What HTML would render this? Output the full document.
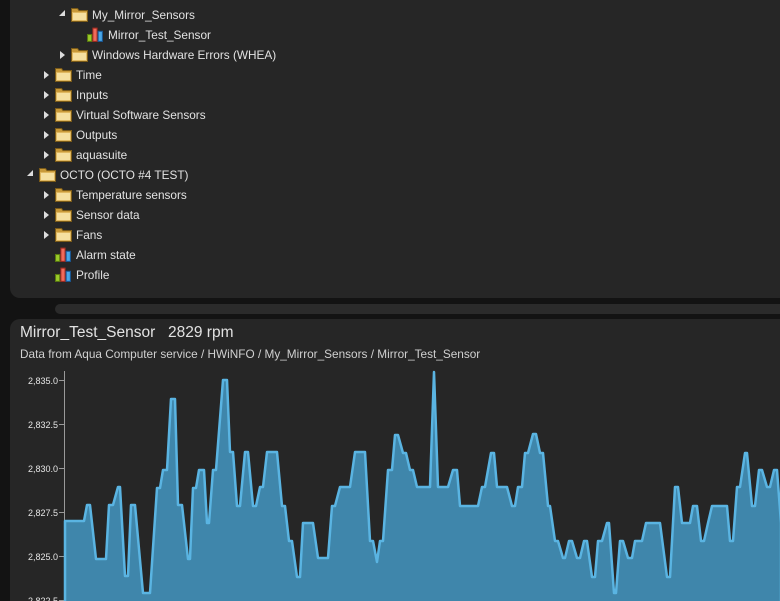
<!DOCTYPE html><html><head><style>
html,body{margin:0;width:780px;height:601px;overflow:hidden}
body{background:#131313;position:relative;font-family:"Liberation Sans","DejaVu Sans",sans-serif;color:#e2e2e2}
.p1{position:absolute;left:10px;top:-10px;width:790px;height:308px;background:#262626;border-radius:10px}
.sb{position:absolute;left:55px;top:304px;width:740px;height:10px;background:#2b2b2b;border-radius:5px}
.p2{position:absolute;left:10px;top:319px;width:790px;height:300px;background:#262626;border-radius:10px}
.r{position:absolute;font-size:11.8px;line-height:20px;height:20px;white-space:nowrap}
.ar{position:absolute;width:0;height:0}
.ar.c{border-left:5px solid #ddd;border-top:4px solid transparent;border-bottom:4px solid transparent}
.ar.o{border-right:6px solid #ddd;border-top:6px solid transparent}
.f{position:absolute}
</style></head><body>
<div class="p1"></div><div class="sb"></div><div class="p2"></div>
<svg width="0" height="0" style="position:absolute"><defs>
<symbol id="fd" viewBox="0 0 17 15"><path d="M0.5 1.5h6l1.5 2h8.5v11h-16z" fill="#c99a3a" stroke="#7a5a18"/><rect x="1.5" y="5.5" width="14" height="8" fill="#f6e0a0" stroke="#e0b860"/></symbol>
<symbol id="sn" viewBox="0 0 16 14"><rect x="0.5" y="7" width="4" height="6.5" fill="#9bcb2a" stroke="#5a7a10"/><rect x="5.5" y="1" width="4" height="12.5" fill="#f06a5a" stroke="#a02a20"/><rect x="10.5" y="4" width="4" height="9.5" fill="#4aa8e8" stroke="#1a5a98"/></symbol>
</defs></svg>
<div id="tree"></div>
<script>
var rows=[[2,'o','f','My_Mirror_Sensors'],[3,'','s','Mirror_Test_Sensor'],[2,'c','f','Windows Hardware Errors (WHEA)'],[1,'c','f','Time'],[1,'c','f','Inputs'],[1,'c','f','Virtual Software Sensors'],[1,'c','f','Outputs'],[1,'c','f','aquasuite'],[0,'o','f','OCTO (OCTO #4 TEST)'],[1,'c','f','Temperature sensors'],[1,'c','f','Sensor data'],[1,'c','f','Fans'],[1,'','s','Alarm state'],[1,'','s','Profile']];
var h='';rows.forEach(function(r,i){var y=5+i*20,b=[7,23,39,55][r[0]];
if(r[1]=='c')h+='<div class="ar c" style="left:'+(b+21)+'px;top:'+(y+6)+'px"></div>';
if(r[1]=='o')h+='<div class="ar o" style="left:'+(b+20)+'px;top:'+(y+5)+'px"></div>';
var ix=b+32;h+='<svg class="f" style="left:'+ix+'px;top:'+(y+2)+'px;width:17px;height:15px"><use href="#'+(r[2]=='f'?'fd':'sn')+'"/></svg>';
h+='<div class="r" style="left:'+(ix+21)+'px;top:'+y+'px">'+r[3]+'</div>';});
document.getElementById('tree').innerHTML=h;
</script>
<div style="position:absolute;left:20px;top:324px;font-size:15.5px">Mirror_Test_Sensor<span style="position:absolute;left:148px;white-space:nowrap">2829 rpm</span></div>
<div style="position:absolute;left:20px;top:347px;font-size:11.8px;color:#d0d0d0">Data from Aqua Computer service / HWiNFO / My_Mirror_Sensors / Mirror_Test_Sensor</div>
<svg style="position:absolute;left:0;top:0" width="780" height="601">
<g font-size="9" fill="#e6e6e6" text-anchor="end" font-family="Liberation Sans,sans-serif">
<text x="58" y="384">2,835.0</text><text x="58" y="428">2,832.5</text><text x="58" y="472">2,830.0</text><text x="58" y="516">2,827.5</text><text x="58" y="560">2,825.0</text><text x="58" y="604">2,822.5</text></g>
<g stroke="#999"><path d="M59 380.5h5M59 424.5h5M59 468.5h5M59 512.5h5M59 556.5h5M59 600.5h5"/><path d="M64.5 371V601"/></g>
<polygon fill="#3f86ab" stroke="#5ab4e2" stroke-width="2.5" stroke-linejoin="round" points="65,603 65,521 84,521 87,505 90,505 96,559 106,559 109,505 113,505 118,487 120,487 125,576 128,576 131,505 135,505 143,593 150,593 157,488 160,488 163,470 167,470 171,399 175,399 178,505 182,505 188,559 190,559 193,488 196,488 199,470 204,470 207,523 209,523 213,470 216,470 223,380 227,380 230,452 233,452 237,506 240,506 245,452 248,452 253,506 256,506 260,487 263,487 267,452 277,452 282,506 285,506 289,541 292,541 297,577 300,577 303,523 313,523 318,558 328,558 332,506 335,506 340,487 350,487 355,452 365,452 370,541 373,541 377,562 380,541 383,541 388,470 392,470 395,435 398,435 403,453 406,453 410,470 413,470 417,487 430,487 434,372 438,487 448,487 453,470 457,470 460,506 478,506 482,487 485,487 491,453 494,453 497,487 507,487 512,506 515,506 518,487 522,487 525,453 528,453 533,434 536,434 540,453 543,453 548,506 550,506 555,541 558,541 563,558 565,558 569,541 572,541 577,558 580,558 584,541 587,541 592,577 595,577 598,541 602,541 607,523 609,523 614,593 616,593 620,541 623,541 628,558 632,558 635,541 642,541 646,523 660,523 667,577 670,577 675,487 678,487 682,523 690,523 693,506 697,506 701,541 704,541 708,523 712,506 727,506 730,541 733,541 737,487 740,487 745,453 747,453 752,506 755,506 759,470 762,470 767,487 770,487 774,470 777,470 781,523 781,603"/>
</svg>
</body></html>
